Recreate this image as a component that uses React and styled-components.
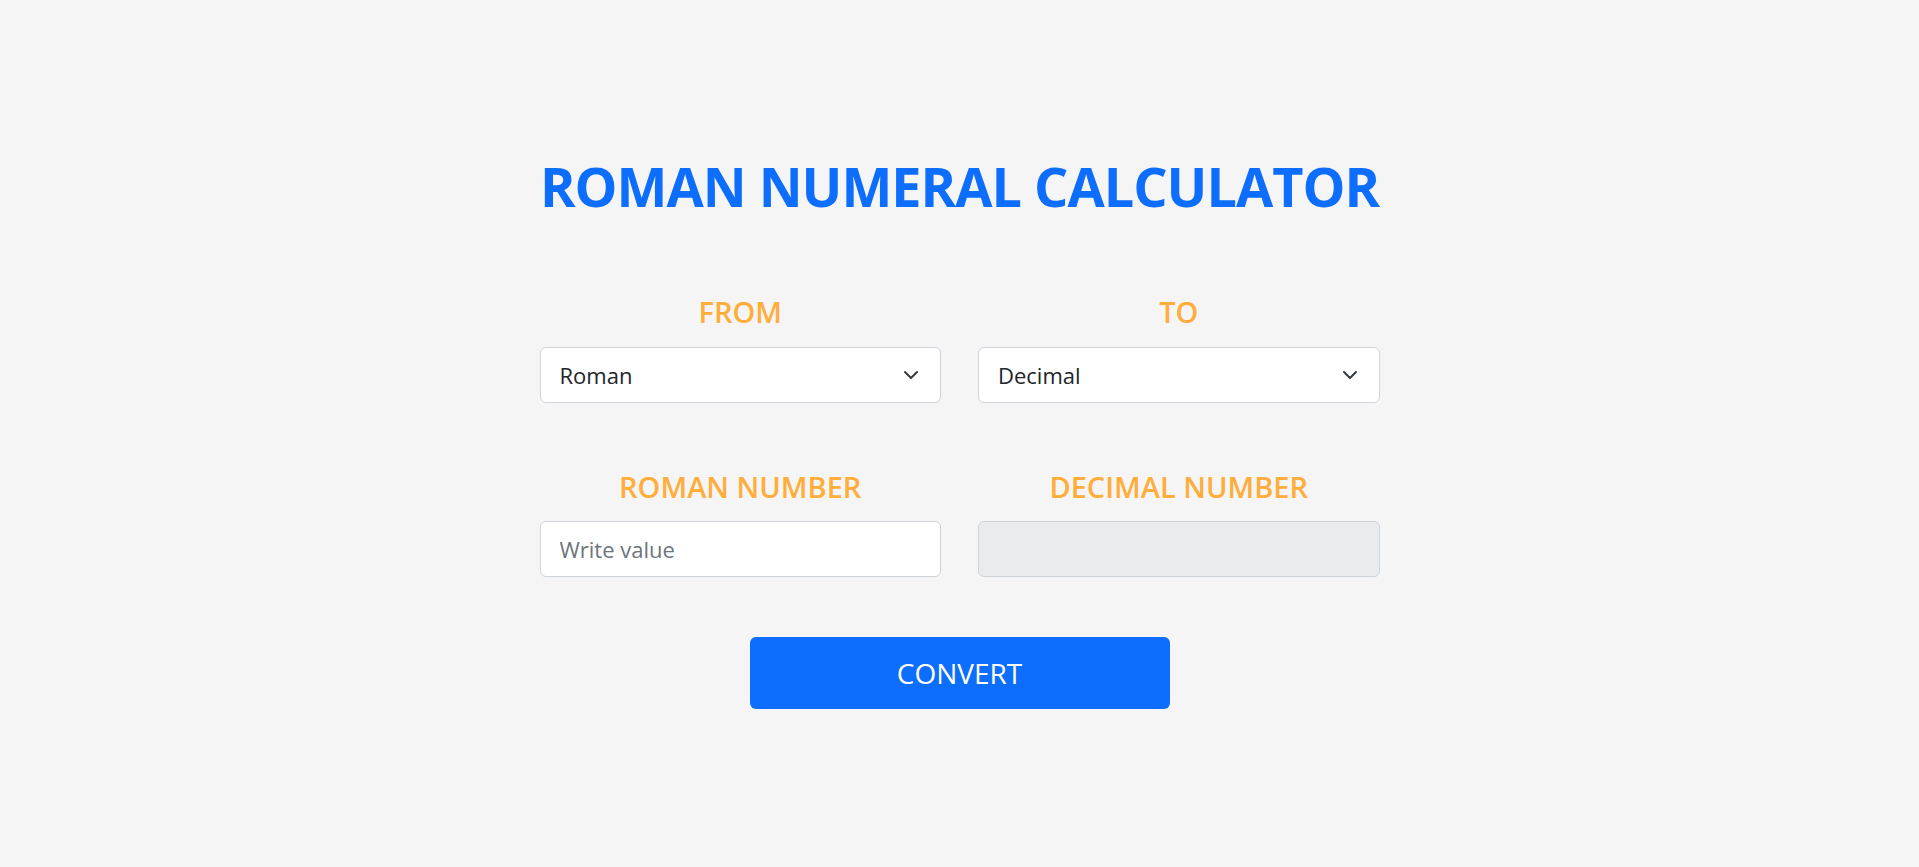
import React, { useState } from 'react';
import styled, { createGlobalStyle } from 'styled-components';

const Blue = '#0d6efd';
const Orange = '#ffad3b';
const Border = '#ced4da';

const GlobalStyle = createGlobalStyle`
  html, body {
    margin: 0;
    padding: 0;
    background-color: #f5f5f5;
  }
  body {
    font-family: "Open Sans", "Noto Sans", sans-serif;
    color: #212529;
  }
`;

const Page = styled.main`
  width: 840px;
  margin: 0 auto;
  padding-top: 154px;
  padding-bottom: 120px;
`;

const Title = styled.h1`
  margin: 0 0 76px;
  font-size: 54px;
  line-height: 1.2;
  font-weight: 700;
  letter-spacing: -1px;
  white-space: nowrap;
  text-align: center;
  color: ${Blue};
`;

const Grid = styled.div`
  display: grid;
  grid-template-columns: 1fr 1fr;
  column-gap: 37px;
  row-gap: 67px;
`;

const Field = styled.div`
  display: flex;
  flex-direction: column;
  align-items: center;
`;

const Label = styled.h3`
  margin: 0 0 17px;
  font-size: 29px;
  line-height: 1.2;
  font-weight: 600;
  color: ${Orange};
`;

const SelectWrap = styled.div`
  position: relative;
  width: 100%;
`;

const Select = styled.select`
  display: block;
  width: 100%;
  height: 56px;
  padding: 0 56px 0 19px;
  font-family: inherit;
  font-size: 22px;
  color: #212529;
  background-color: #fff;
  border: 1px solid ${Border};
  border-radius: 6px;
  appearance: none;
  outline: none;
`;

const Chevron = styled.svg`
  position: absolute;
  top: 50%;
  right: 22px;
  width: 16px;
  height: 16px;
  transform: translateY(-50%);
  pointer-events: none;
`;

const Input = styled.input`
  display: block;
  box-sizing: border-box;
  width: 100%;
  height: 56px;
  padding: 0 19px;
  font-family: inherit;
  font-size: 22px;
  color: #212529;
  background-color: ${(p) => (p.disabled ? '#e9ecef' : '#fff')};
  border: 1px solid ${Border};
  border-radius: 6px;
  outline: none;

  &::placeholder {
    color: #6c757d;
  }
`;

const Actions = styled.div`
  display: flex;
  justify-content: center;
  margin-top: 60px;
`;

const Button = styled.button`
  width: 420px;
  height: 72px;
  border: none;
  border-radius: 6px;
  background-color: ${Blue};
  color: #fff;
  font-family: inherit;
  font-size: 28px;
  font-weight: 400;
  cursor: pointer;
`;

const Dropdown = ({ value, options, onChange }) => (
  <SelectWrap>
    <Select value={value} onChange={(e) => onChange(e.target.value)}>
      {options.map((o) => (
        <option key={o} value={o}>{o}</option>
      ))}
    </Select>
    <Chevron viewBox="0 0 16 16">
      <path
        d="M2 5l6 6 6-6"
        fill="none"
        stroke="#343a40"
        strokeWidth="2"
        strokeLinecap="round"
        strokeLinejoin="round"
      />
    </Chevron>
  </SelectWrap>
);

const App = () => {
  const [from, setFrom] = useState('Roman');
  const [to, setTo] = useState('Decimal');
  const [value, setValue] = useState('');

  return (
    <>
      <GlobalStyle />
      <Page>
        <Title>ROMAN NUMERAL CALCULATOR</Title>
        <Grid>
          <Field>
            <Label>FROM</Label>
            <Dropdown value={from} options={['Roman', 'Decimal']} onChange={setFrom} />
          </Field>
          <Field>
            <Label>TO</Label>
            <Dropdown value={to} options={['Decimal', 'Roman']} onChange={setTo} />
          </Field>
          <Field>
            <Label>{from.toUpperCase()} NUMBER</Label>
            <Input
              placeholder="Write value"
              value={value}
              onChange={(e) => setValue(e.target.value)}
            />
          </Field>
          <Field>
            <Label>{to.toUpperCase()} NUMBER</Label>
            <Input disabled />
          </Field>
        </Grid>
        <Actions>
          <Button>CONVERT</Button>
        </Actions>
      </Page>
    </>
  );
};

export default App;
